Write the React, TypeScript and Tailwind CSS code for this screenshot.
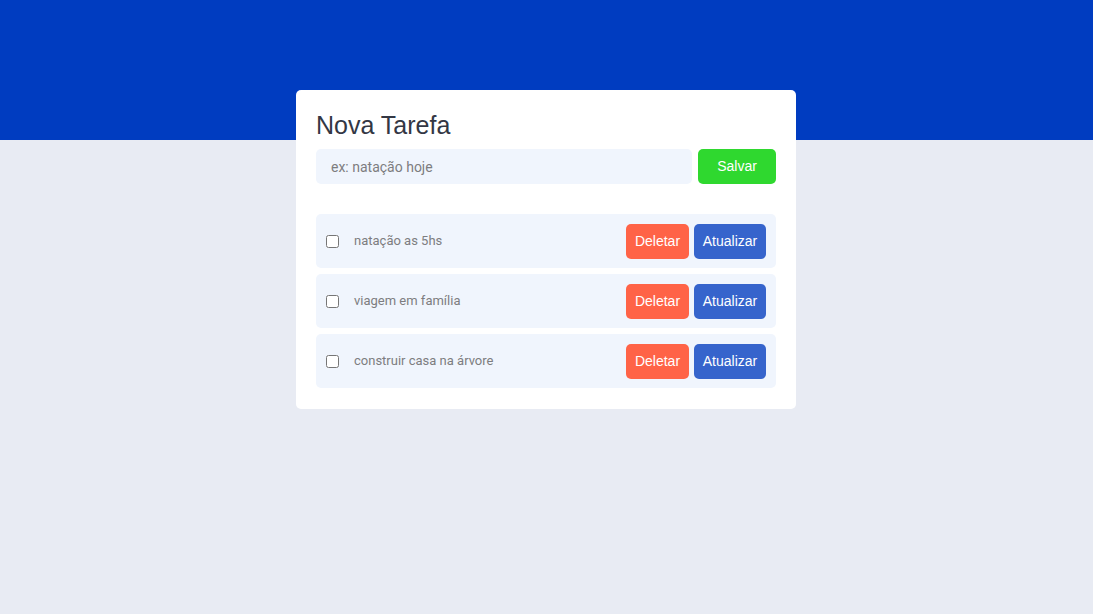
const tasks = ['natação as 5hs', 'viagem em família', 'construir casa na árvore'];

export default function App() {
  return (
    <div className="relative w-full min-h-screen bg-[#e8ebf3] font-['Roboto',sans-serif]">
      <div className="h-[140px] bg-[#003cc0]" />
      <div className="flex justify-center -mt-[50px] pr-[1px]">
        <div className="w-[500px] bg-white rounded-[5px] px-5 pt-5 pb-[21px]">
          <h1 className="text-[25px] leading-[30px] text-[#333744] font-['Liberation_Sans',Arial,sans-serif] mb-[9px]">
            Nova Tarefa
          </h1>
          <div className="flex gap-[6px]">
            <input
              placeholder="ex: natação hoje"
              className="flex-1 h-[35px] rounded-[5px] bg-[#f0f5fd] px-[15px] text-[14px] outline-none placeholder:text-[#7d7d80]"
            />
            <button className="w-[78px] h-[35px] rounded-[5px] bg-[#2fd82f] text-white text-[14px] font-['Liberation_Sans',Arial,sans-serif]">
              Salvar
            </button>
          </div>
          <div className="mt-[30px] flex flex-col gap-[6px]">
            {tasks.map((t) => (
              <div key={t} className="h-[54px] rounded-[5px] bg-[#f0f5fd] flex items-center pl-[10px] pr-[10px]">
                <input type="checkbox" className="w-[13px] h-[13px] mr-[15px] accent-gray-500" />
                <span className="flex-1 text-[13px] text-[#7d7d80]">{t}</span>
                <button className="w-[63px] h-[35px] rounded-[5px] bg-[#ff6347] text-white text-[14px] font-['Liberation_Sans',Arial,sans-serif]">
                  Deletar
                </button>
                <button className="ml-[5px] w-[72px] h-[35px] rounded-[5px] bg-[#3664cc] text-white text-[14px] font-['Liberation_Sans',Arial,sans-serif]">
                  Atualizar
                </button>
              </div>
            ))}
          </div>
        </div>
      </div>
    </div>
  );
}
